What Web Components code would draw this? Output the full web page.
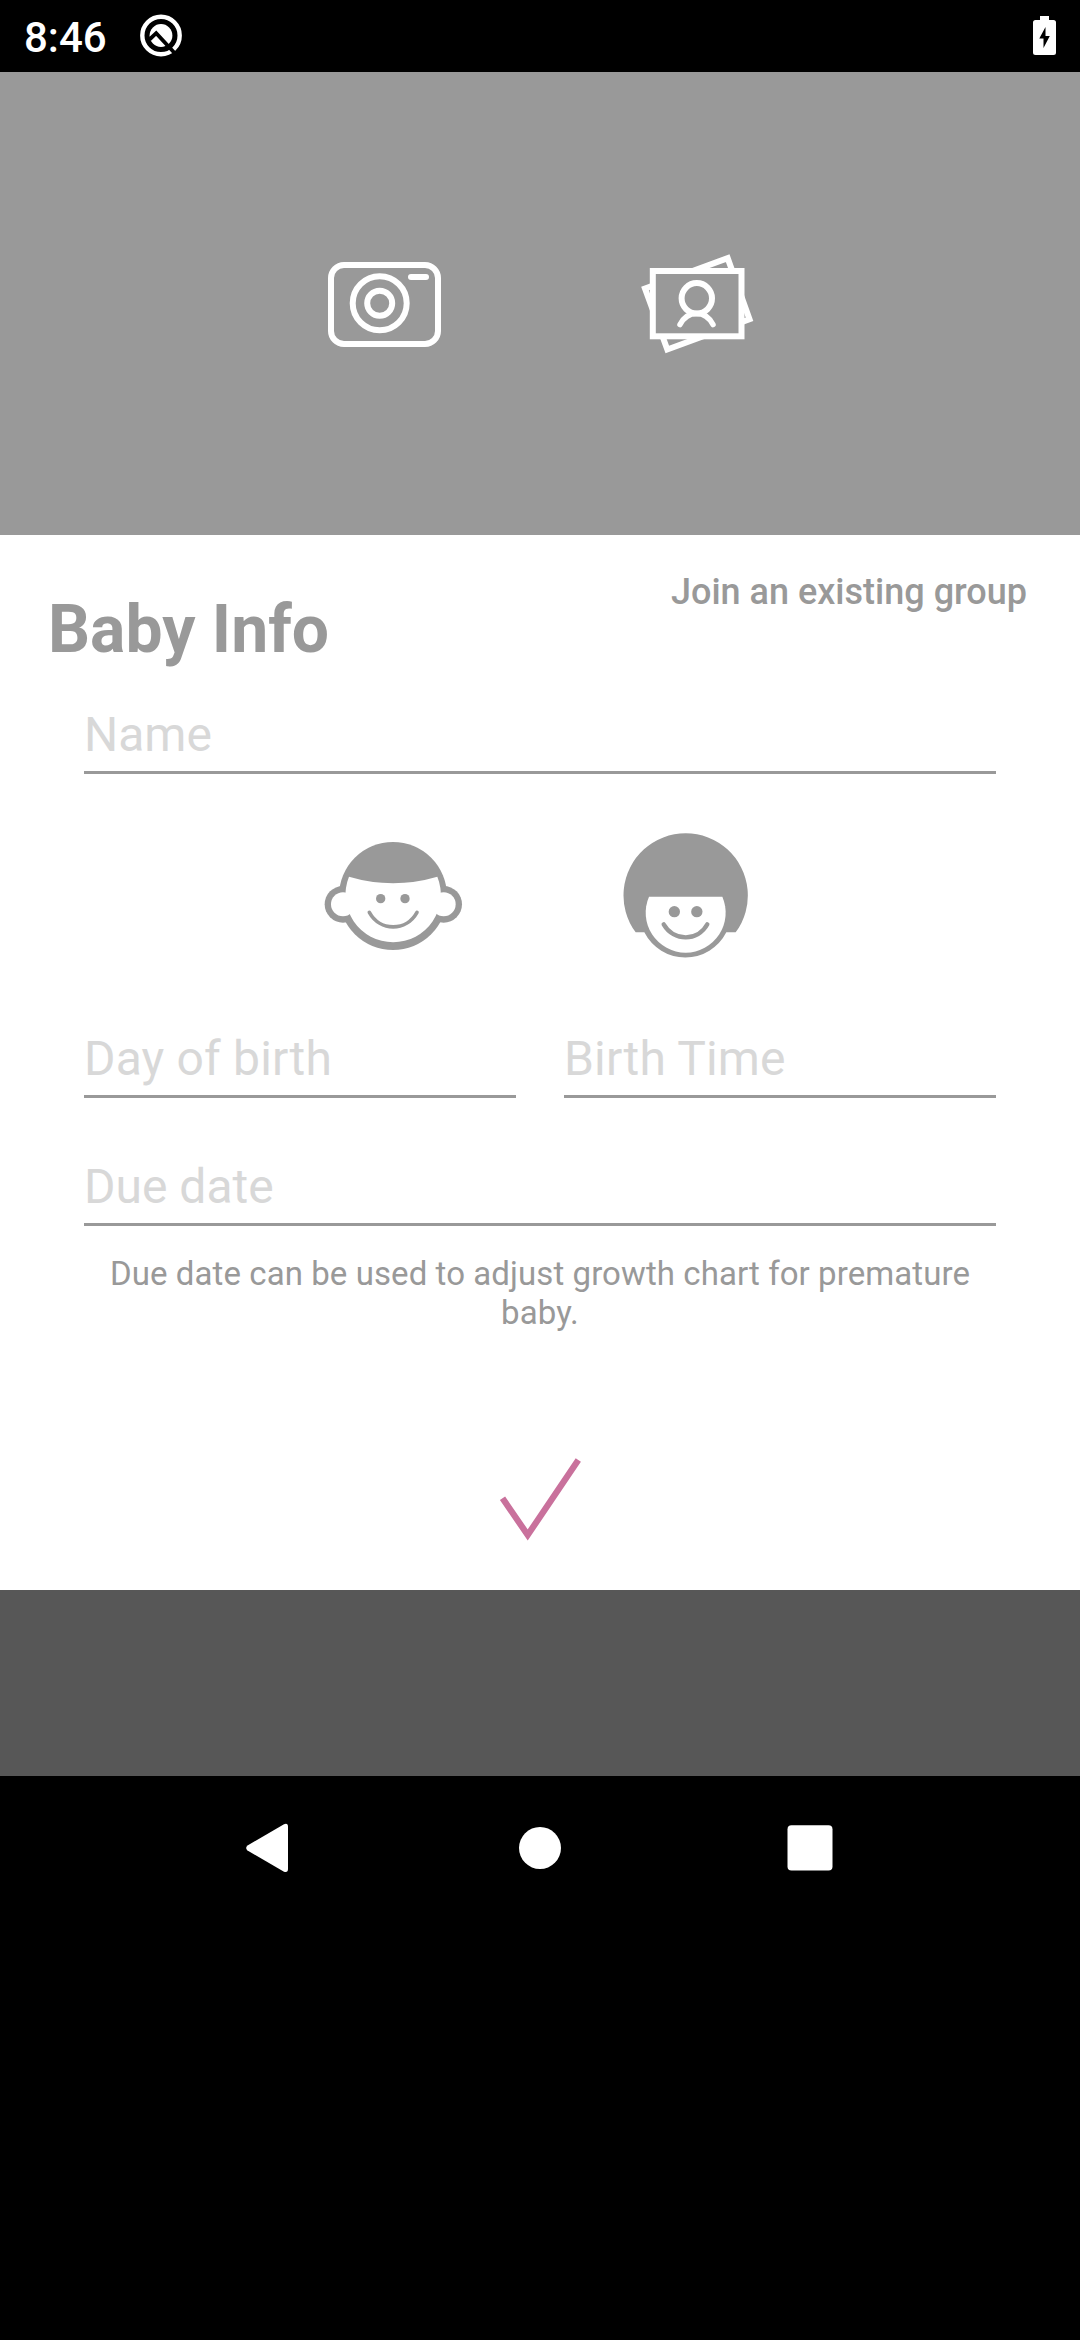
<!DOCTYPE html>
<html lang="en">
<head>
<meta charset="utf-8">
<title>Baby Info</title>
<style>
html,body{margin:0;background:#000}
body{width:1080px;height:2340px;overflow:hidden;font-family:Roboto,"Liberation Sans",sans-serif}
</style>
</head>
<body>
<baby-screen></baby-screen>
<script>
const define = (name, html) => customElements.define(name, class extends HTMLElement {
  constructor() {
    super();
    const t = document.createElement('template');
    t.innerHTML = html;
    this.attachShadow({ mode: 'open' }).appendChild(t.content.cloneNode(true));
  }
});

define('status-bar', `
<style>
:host{display:flex;flex:none;height:72px;background:#000;color:#fff;align-items:flex-start;box-sizing:border-box;padding:13px 24px 0 24px}
time{font-size:42px;line-height:49px;font-weight:500;width:115px}
svg{display:block;margin-top:1px}
.bat{margin-left:auto;margin-top:3px}
</style>
<time>8:46</time>
<svg width="44" height="44" viewBox="139 14 44 44">
  <circle cx="161" cy="35.5" r="18.7" fill="none" stroke="#fff" stroke-width="4.4"/>
  <circle cx="161" cy="35.5" r="11.4" fill="#fff"/>
  <path d="M149.500 39.500L156.200 33.200L175.500 54" fill="none" stroke="#000" stroke-width="3.8"/>
</svg>
<svg class="bat" width="23" height="39" viewBox="1033 16 23 39">
  <path fill="#fff" d="M1040 16h9v4h4.500q2.500 0 2.500 2.500v30q0 2.500-2.500 2.500h-18q-2.500 0-2.500-2.500v-30q0-2.500 2.500-2.500h4.500z"/>
  <path fill="#000" d="M1045.500 27v9h4.300l-6.300 12v-9.500h-4.200z"/>
</svg>`);

define('photo-header', `
<style>
:host{display:flex;flex:none;height:463px;background:#999;justify-content:center;align-items:flex-start;gap:199.500px;box-sizing:border-box;padding:179px 0 0 1.500px}
svg{display:block}
</style>
<svg width="113" height="100" viewBox="328 251 113 100" fill="none" stroke="#fff" stroke-width="6">
  <rect x="331" y="265" width="107" height="79" rx="13"/>
  <circle cx="379.700" cy="303.300" r="27"/>
  <circle cx="379.700" cy="303.300" r="12.500"/>
  <path d="M411 277h15" stroke-linecap="round"/>
</svg>
<svg width="113" height="104" viewBox="640.500 251 113 104" fill="none" stroke="#fff" stroke-width="6">
  <path d="M644.500 288.500L727.200 258.200L749 319.200L666.800 349.500Z"/>
  <rect x="652.300" y="271" width="88.700" height="65.300" fill="#999"/>
  <circle cx="696.300" cy="298.300" r="15.200"/>
  <path d="M679.500 324.500C683.500 317 689.500 313.500 696 313.500S708.500 317 712.500 324.500" stroke-width="5.500" stroke-linecap="round"/>
</svg>`);

define('form-field', `
<style>
:host{display:block;flex:1;border-bottom:3px solid #999;padding-bottom:8px;font-size:48px;line-height:56px;color:#d8d8d8;white-space:nowrap}
</style>
<slot></slot>`);

define('gender-picker', `
<style>
:host{display:flex;justify-content:center;align-items:flex-start;gap:160px;padding-right:7.400px}
svg{display:block}
</style>
<svg width="139" height="130" viewBox="43 33 417 390">
  <g fill="#999"><circle cx="100" cy="253" r="55"/><circle cx="402" cy="253" r="55"/><circle cx="250" cy="228" r="162"/></g>
  <g fill="#fff"><circle cx="100" cy="253" r="36"/><circle cx="402" cy="253" r="36"/><path d="M118 170Q250 209 383 170A143 143 0 1 1 118 170Z"/></g>
  <g fill="#999"><circle cx="213" cy="236" r="14"/><circle cx="286" cy="236" r="14"/></g>
  <path d="M179 277C211 335 290 335 322 277" fill="none" stroke="#999" stroke-width="11" stroke-linecap="round"/>
</svg>
<svg width="125" height="130" viewBox="40 33 375 390">
  <path fill="#999" d="M78 337A186.500 186.500 0 1 1 378 337L350 337A138 138 0 0 1 104 337Z"/>
  <path fill="#fff" d="M118 230H338A120 120 0 1 1 118 230Z"/>
  <g fill="#999"><circle cx="194" cy="275" r="17"/><circle cx="261.500" cy="275" r="17"/></g>
  <path d="M162 313C192 365 265 365 293 313" fill="none" stroke="#999" stroke-width="13" stroke-linecap="round"/>
</svg>`);

define('baby-form', `
<style>
:host{display:flex;flex:none;flex-direction:column;height:1055px;background:#fff;color:#999;box-sizing:border-box;padding:36px 0 0}
header{display:flex;justify-content:space-between;align-items:flex-start;padding:0 53px 0 48px;height:136px;box-sizing:border-box;white-space:nowrap}
h1{margin:20px 0 0;font-size:66px;line-height:77px;font-weight:700}
a{font-size:36px;line-height:42px;font-weight:500}
.row{display:flex;gap:48px;padding:0 84px}
.birth{letter-spacing:.17px}
gender-picker{margin-top:57px;height:200px}
.due{margin-top:61px}
p{margin:28px 90px 0;font-size:33px;line-height:39px;text-align:center;letter-spacing:.08px}
svg{display:block;margin:122px auto 0}
</style>
<header><h1>Baby Info</h1><a>Join an existing group</a></header>
<div class="row"><form-field>Name</form-field></div>
<gender-picker></gender-picker>
<div class="row birth"><form-field>Day of birth</form-field><form-field>Birth Time</form-field></div>
<div class="row due"><form-field>Due date</form-field></div>
<p>Due date can be used to adjust growth chart for premature baby.</p>
<svg width="84" height="90" viewBox="498 1454 84 90"><path d="M502.500 1498.200L527.700 1535L578.300 1460" fill="none" stroke="#c9719c" stroke-width="6.300"/></svg>`);

define('nav-bar', `
<style>
:host{display:flex;flex:none;height:144px;background:#000;justify-content:center;align-items:center}
svg{display:block}
</style>
<svg width="640" height="60" viewBox="220 1818 640 60" fill="#fff">
  <path d="M247.500 1845.500L284 1824.300Q288 1822.700 288 1827V1869Q288 1873 284 1871.700L247.500 1850.500Q244.800 1848 247.500 1845.500Z"/>
  <circle cx="540" cy="1848" r="21"/>
  <rect x="787.500" y="1825.300" width="45" height="45.300" rx="4"/>
</svg>`);

define('baby-screen', `
<style>
:host{display:flex;flex-direction:column;width:1080px;height:2340px;background:#000}
.dim{flex:none;height:186px;background:#575757}
</style>
<status-bar></status-bar>
<photo-header></photo-header>
<baby-form></baby-form>
<div class="dim"></div>
<nav-bar></nav-bar>`);
</script>
</body>
</html>
